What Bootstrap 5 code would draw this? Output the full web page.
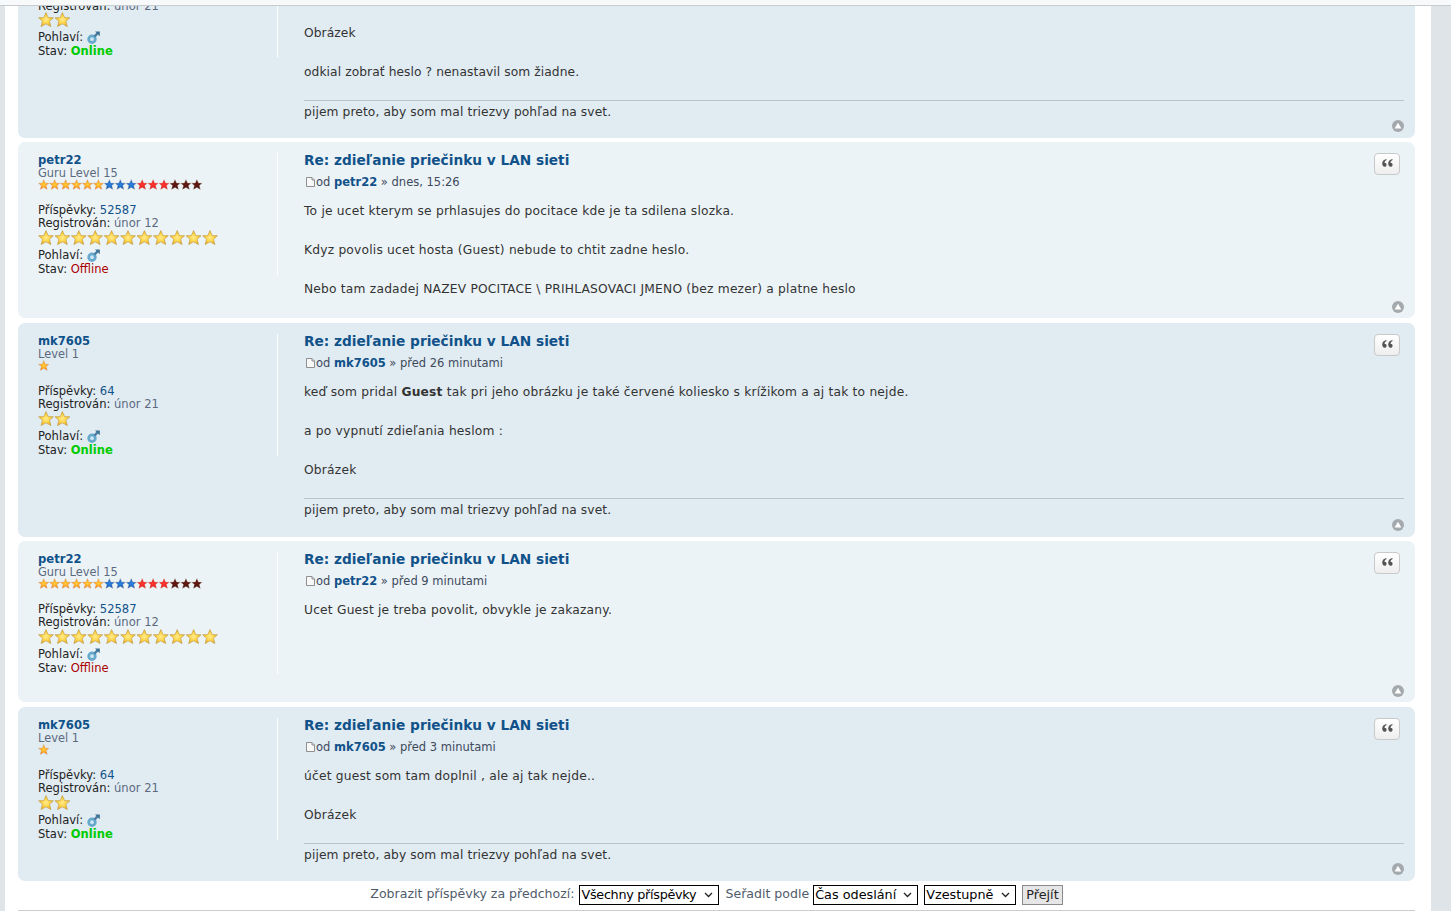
<!DOCTYPE html>
<html lang="cs">
<head>
<meta charset="utf-8">
<title>Re: zdieľanie priečinku v LAN sieti</title>
<link href="https://cdn.jsdelivr.net/npm/bootstrap@5.3.0/dist/css/bootstrap.min.css" rel="stylesheet">
<style>
html,body{height:911px;overflow:hidden}
body{background:#dfe4e8;font-family:"DejaVu Sans","Liberation Sans",sans-serif;color:#333;font-size:12px}
.svg-defs{position:absolute;width:0;height:0}
.top-strip{height:6px;background:#f8f9fa;border-bottom:1px solid #c9cccf}
.page-wrap{width:1426px;margin-left:5px;background:#fff;height:905px;padding:0 16px 0 13px}
.post-box{border-radius:7px;padding:11px 11px 0 20px;margin-bottom:4px;position:relative;overflow:hidden}
.tone-a{background:#e1ebf2}
.tone-b{background:#ecf3f7}
.post-first{height:132px;border-radius:0 0 7px 7px;padding-top:0}
.post-h2{height:176px;margin-bottom:5px}
.post-h3{height:214px}
.post-h4{height:161px;margin-bottom:5px}
.post-h5{height:174px;margin-bottom:0}
.side-col{width:240px;height:122px;flex:none;border-right:1px solid #fff;font-size:11.55px;line-height:13.4px;color:#222;padding-top:1px}
.side-first{margin-top:-7px;height:58px}
.user-name{font-weight:700;font-size:11.6px;color:#105289;display:block;line-height:13px}
.rank-name{color:#5b6a80;display:block;line-height:13px;font-size:11.4px}
.rank-row{display:block;height:12px;width:165px;margin:-1px 0 13px}
.rank-row.one{width:11px}
.rate-row{display:block;height:18px;margin:-1px 0 1px;width:182px}
.rate-row.two{width:34px}
.val-link{color:#105289}
.val-grey{color:#5b6a80}
.state-line{margin-top:1px}
.st-on{color:#00cc00;font-weight:700}
.st-off{color:#aa0000}
.sex-icon{width:13px;height:13px;vertical-align:-3px}
.body-col{padding-left:26px;min-width:0;flex:1 1 auto}
.post-title{font-size:13.7px;font-weight:700;color:#105289;line-height:17px;margin:-1px 0 5px}
.post-meta{font-size:11.5px;line-height:14px;color:#3e4a5c;margin-bottom:15px;padding-top:1px}
.post-meta b{color:#105289}
.doc-icon{width:9px;height:10px;vertical-align:-1px;margin:0 1px 0 2px}
.post-text{font-size:12.25px;line-height:15px;color:#333;letter-spacing:.2px}
.post-text p{margin:0 0 24.2px}
.first-text{padding-top:20px;letter-spacing:.08px}
.sig-line{font-size:12.25px;line-height:15px;color:#333;letter-spacing:.1px;border-top:1px solid #bcc3c9;padding-top:4px;margin-top:-4.5px}
.quote-btn{position:absolute;right:15px;top:11px;width:26px;height:22px;border:1px solid #c9c9c9;border-radius:4px;background:linear-gradient(#fff,#eee);display:flex;align-items:center;justify-content:center}
.quote-btn svg{width:11px;height:8px;margin-top:-2px}
.up-icon{position:absolute;right:11px;bottom:6px;width:12px;height:12px}
.post-h2 .up-icon,.post-h4 .up-icon{bottom:5px}
.sort-bar{height:29px;gap:5px;font-size:12.55px;color:#4f5b6b;padding-bottom:1px}
.sort-bar label{white-space:nowrap;padding-bottom:2px}
.sort-sel{appearance:none;-webkit-appearance:none;height:20px;border:1px solid #000;color:#000;font:12.8px "DejaVu Sans",sans-serif;padding:0 0 2px 1px;border-radius:0;background:#fff url("data:image/svg+xml,%3Csvg xmlns='http://www.w3.org/2000/svg' width='9' height='6'%3E%3Cpath d='M1 1l3.5 3.5L8 1' fill='none' stroke='%23222' stroke-width='1.3'/%3E%3C/svg%3E") no-repeat right 5px center}
.sel-all{width:140px;letter-spacing:-.3px}
.sel-time{width:105px;margin-left:-1px}
.sel-dir{width:92px;margin-left:1px}
.sort-go{height:20px;border:1px solid #8a8a8a;background:#e6e6e6;color:#222;font-size:12.8px;padding:0 3px 1px;line-height:16px;margin-left:1px}
.sort-gap{margin-left:1px}
.end-rule{border-top:2px solid #ccc;height:2px}
</style>
</head>
<body>
<svg class="svg-defs" aria-hidden="true">
<defs>
<radialGradient id="gGold"><stop offset="0" stop-color="#ffeb90"/><stop offset=".55" stop-color="#ffd548"/><stop offset="1" stop-color="#eaa824"/></radialGradient>
<radialGradient id="gOrange"><stop offset="0" stop-color="#ffd23c"/><stop offset=".6" stop-color="#ffa326"/><stop offset="1" stop-color="#f06a14"/></radialGradient>
<radialGradient id="gBlue"><stop offset="0" stop-color="#2f86e0"/><stop offset="1" stop-color="#0e55b8"/></radialGradient>
<radialGradient id="gRed"><stop offset="0" stop-color="#ff3a30"/><stop offset="1" stop-color="#e0141c"/></radialGradient>
<radialGradient id="gDark"><stop offset="0" stop-color="#6a1a14"/><stop offset="1" stop-color="#3c0c0a"/></radialGradient>
<polygon id="star" points="8,0.6 10.2,5.6 15.4,5.8 11.5,9.2 12.9,14.6 8,11.8 3.1,14.6 4.5,9.2 0.6,5.8 5.8,5.6"/>
<symbol id="rank15" viewBox="0 0 165 12">
<g transform="scale(.715)" stroke="#c9b9a0" stroke-opacity=".6" stroke-width=".8">
<use href="#star" x="0" fill="url(#gOrange)"/><use href="#star" x="15.3" fill="url(#gOrange)"/><use href="#star" x="30.6" fill="url(#gOrange)"/><use href="#star" x="45.9" fill="url(#gOrange)"/><use href="#star" x="61.2" fill="url(#gOrange)"/><use href="#star" x="76.5" fill="url(#gOrange)"/>
<use href="#star" x="91.8" fill="url(#gBlue)"/><use href="#star" x="107.1" fill="url(#gBlue)"/><use href="#star" x="122.4" fill="url(#gBlue)"/>
<use href="#star" x="137.7" fill="url(#gRed)"/><use href="#star" x="153" fill="url(#gRed)"/><use href="#star" x="168.3" fill="url(#gRed)"/>
<use href="#star" x="183.6" fill="url(#gDark)"/><use href="#star" x="198.9" fill="url(#gDark)"/><use href="#star" x="214.2" fill="url(#gDark)"/>
</g>
</symbol>
<symbol id="rank1" viewBox="0 0 11 12"><g transform="scale(.72)" stroke="#c9b9a0" stroke-opacity=".6" stroke-width=".8"><use href="#star" fill="url(#gOrange)"/></g></symbol>
<symbol id="rate11" viewBox="0 0 182 18">
<g stroke="#c2a24c" stroke-width=".7">
<use href="#star" x="0" fill="url(#gGold)"/><use href="#star" x="16.4" fill="url(#gGold)"/><use href="#star" x="32.8" fill="url(#gGold)"/><use href="#star" x="49.2" fill="url(#gGold)"/><use href="#star" x="65.6" fill="url(#gGold)"/><use href="#star" x="82" fill="url(#gGold)"/><use href="#star" x="98.4" fill="url(#gGold)"/><use href="#star" x="114.8" fill="url(#gGold)"/><use href="#star" x="131.2" fill="url(#gGold)"/><use href="#star" x="147.6" fill="url(#gGold)"/><use href="#star" x="164" fill="url(#gGold)"/>
</g>
</symbol>
<symbol id="rate2" viewBox="0 0 34 18"><g stroke="#c2a24c" stroke-width=".7"><use href="#star" x="0" fill="url(#gGold)"/><use href="#star" x="16.4" fill="url(#gGold)"/></g></symbol>
<symbol id="male" viewBox="0 0 13 13">
<circle cx="5" cy="8.200" r="3.300" fill="#cfe6f2" stroke="#66a9cd" stroke-width="2.800"/><path d="M7.400 5.600 10.600 2.400" stroke="#4a7fa3" stroke-width="2.400"/><path d="M8 .4h4.800v4.800z" fill="#3d6f92"/>
</symbol>
<symbol id="doc" viewBox="0 0 9 10"><path d="M.5.5h5.500l2.500 2.500v6.500h-8z" fill="#f8f8f8" stroke="#8f8f8f"/><path d="M6 .5v2.500h2.500" fill="#ddd" stroke="#8f8f8f"/></symbol>
<symbol id="upc" viewBox="0 0 12 12"><circle cx="6" cy="6" r="6" fill="#a4a9ad"/><path d="M6 2.800 9.400 8.400H2.600z" fill="#fff"/></symbol>
<symbol id="qmark" viewBox="0 0 11 8"><path d="M4.300 0C1.800.6.200 2.200.200 4.600c0 1.900 1 3.200 2.300 3.200 1.300 0 2.100-.9 2.100-2.100 0-1.200-.9-2-2.100-1.900 0-1.100.8-2.200 2.100-2.900zM10.300 0C7.800.6 6.200 2.200 6.200 4.600c0 1.900 1 3.200 2.300 3.200 1.300 0 2.100-.9 2.100-2.100 0-1.200-.9-2-2.100-1.900 0-1.100.8-2.200 2.100-2.900z" fill="#555"/></symbol>
</defs>
</svg>

<div class="top-strip"></div>
<main class="page-wrap">

<article class="post-box tone-a post-first d-flex">
  <div class="side-col side-first align-self-start">
    <div>Registrován: <span class="val-grey">únor 21</span></div>
    <svg class="rate-row two"><use href="#rate2"/></svg>
    <div>Pohlaví: <svg class="sex-icon"><use href="#male"/></svg></div>
    <div>Stav: <span class="st-on">Online</span></div>
  </div>
  <div class="body-col">
    <div class="post-text first-text"><p>Obrázek</p><p>odkial zobrať heslo ? nenastavil som žiadne.</p></div>
    <div class="sig-line">pijem preto, aby som mal triezvy pohľad na svet.</div>
  </div>
  <svg class="up-icon"><use href="#upc"/></svg>
</article>

<article class="post-box tone-b post-h2 d-flex">
  <div class="side-col align-self-start">
    <a class="user-name text-decoration-none" href="#">petr22</a>
    <span class="rank-name">Guru Level 15</span>
    <svg class="rank-row"><use href="#rank15"/></svg>
    <div>Příspěvky: <span class="val-link">52587</span></div>
    <div>Registrován: <span class="val-grey">únor 12</span></div>
    <svg class="rate-row"><use href="#rate11"/></svg>
    <div>Pohlaví: <svg class="sex-icon"><use href="#male"/></svg></div>
    <div class="state-line">Stav: <span class="st-off">Offline</span></div>
  </div>
  <div class="body-col">
    <h3 class="post-title">Re: zdieľanie priečinku v LAN sieti</h3>
    <div class="post-meta"><svg class="doc-icon"><use href="#doc"/></svg>od <b>petr22</b> » dnes, 15:26</div>
    <div class="post-text"><p>To je ucet kterym se prhlasujes do pocitace kde je ta sdilena slozka.</p><p>Kdyz povolis ucet hosta (Guest) nebude to chtit zadne heslo.</p><p>Nebo tam zadadej NAZEV POCITACE \ PRIHLASOVACI JMENO (bez mezer) a platne heslo</p></div>
  </div>
  <div class="quote-btn"><svg><use href="#qmark"/></svg></div>
  <svg class="up-icon"><use href="#upc"/></svg>
</article>

<article class="post-box tone-a post-h3 d-flex">
  <div class="side-col align-self-start">
    <a class="user-name text-decoration-none" href="#">mk7605</a>
    <span class="rank-name">Level 1</span>
    <svg class="rank-row one"><use href="#rank1"/></svg>
    <div>Příspěvky: <span class="val-link">64</span></div>
    <div>Registrován: <span class="val-grey">únor 21</span></div>
    <svg class="rate-row two"><use href="#rate2"/></svg>
    <div>Pohlaví: <svg class="sex-icon"><use href="#male"/></svg></div>
    <div class="state-line">Stav: <span class="st-on">Online</span></div>
  </div>
  <div class="body-col">
    <h3 class="post-title">Re: zdieľanie priečinku v LAN sieti</h3>
    <div class="post-meta"><svg class="doc-icon"><use href="#doc"/></svg>od <b>mk7605</b> » před 26 minutami</div>
    <div class="post-text"><p>keď som pridal <b>Guest</b> tak pri jeho obrázku je také červené koliesko s krížikom a aj tak to nejde.</p><p>a po vypnutí zdieľania heslom :</p><p>Obrázek</p></div>
    <div class="sig-line">pijem preto, aby som mal triezvy pohľad na svet.</div>
  </div>
  <div class="quote-btn"><svg><use href="#qmark"/></svg></div>
  <svg class="up-icon"><use href="#upc"/></svg>
</article>

<article class="post-box tone-b post-h4 d-flex">
  <div class="side-col align-self-start">
    <a class="user-name text-decoration-none" href="#">petr22</a>
    <span class="rank-name">Guru Level 15</span>
    <svg class="rank-row"><use href="#rank15"/></svg>
    <div>Příspěvky: <span class="val-link">52587</span></div>
    <div>Registrován: <span class="val-grey">únor 12</span></div>
    <svg class="rate-row"><use href="#rate11"/></svg>
    <div>Pohlaví: <svg class="sex-icon"><use href="#male"/></svg></div>
    <div class="state-line">Stav: <span class="st-off">Offline</span></div>
  </div>
  <div class="body-col">
    <h3 class="post-title">Re: zdieľanie priečinku v LAN sieti</h3>
    <div class="post-meta"><svg class="doc-icon"><use href="#doc"/></svg>od <b>petr22</b> » před 9 minutami</div>
    <div class="post-text"><p>Ucet Guest je treba povolit, obvykle je zakazany.</p></div>
  </div>
  <div class="quote-btn"><svg><use href="#qmark"/></svg></div>
  <svg class="up-icon"><use href="#upc"/></svg>
</article>

<article class="post-box tone-a post-h5 d-flex">
  <div class="side-col align-self-start">
    <a class="user-name text-decoration-none" href="#">mk7605</a>
    <span class="rank-name">Level 1</span>
    <svg class="rank-row one"><use href="#rank1"/></svg>
    <div>Příspěvky: <span class="val-link">64</span></div>
    <div>Registrován: <span class="val-grey">únor 21</span></div>
    <svg class="rate-row two"><use href="#rate2"/></svg>
    <div>Pohlaví: <svg class="sex-icon"><use href="#male"/></svg></div>
    <div class="state-line">Stav: <span class="st-on">Online</span></div>
  </div>
  <div class="body-col">
    <h3 class="post-title">Re: zdieľanie priečinku v LAN sieti</h3>
    <div class="post-meta"><svg class="doc-icon"><use href="#doc"/></svg>od <b>mk7605</b> » před 3 minutami</div>
    <div class="post-text"><p>účet guest som tam doplnil , ale aj tak nejde..</p><p>Obrázek</p></div>
    <div class="sig-line">pijem preto, aby som mal triezvy pohľad na svet.</div>
  </div>
  <div class="quote-btn"><svg><use href="#qmark"/></svg></div>
  <svg class="up-icon"><use href="#upc"/></svg>
</article>

<form class="sort-bar d-flex justify-content-center align-items-center">
  <label>Zobrazit příspěvky za předchozí:</label>
  <select class="sort-sel sel-all"><option>Všechny příspěvky</option></select>
  <label class="sort-gap">Seřadit podle</label>
  <select class="sort-sel sel-time"><option>Čas odeslání</option></select>
  <select class="sort-sel sel-dir"><option>Vzestupně</option></select>
  <button type="button" class="sort-go">Přejít</button>
</form>
<div class="end-rule"></div>
</main>
<script src="https://cdn.jsdelivr.net/npm/bootstrap@5.3.0/dist/js/bootstrap.bundle.min.js"></script>
</body>
</html>
